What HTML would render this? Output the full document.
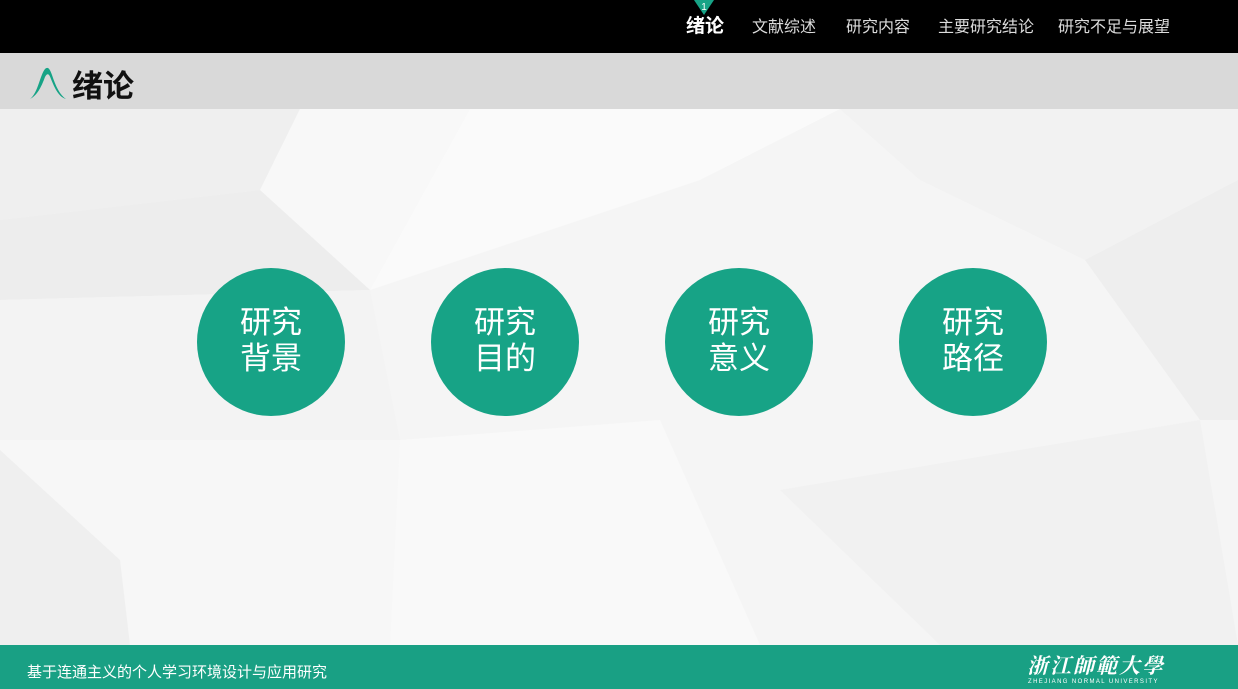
<!DOCTYPE html>
<html><head><meta charset="utf-8"><style>
*{margin:0;padding:0;box-sizing:border-box}
body{width:1238px;height:689px;overflow:hidden;position:relative;background:#f5f5f5;font-family:"Liberation Sans","Noto Sans CJK SC",sans-serif}
.top{position:absolute;left:0;top:0;width:1238px;height:53px;background:#000}
.nav{position:absolute;top:13px;color:#ddd;font-size:16px;white-space:nowrap}
.bar{position:absolute;left:0;top:53px;width:1238px;height:56px;background:#d9d9d9}
.bg{position:absolute;left:0;top:109px;width:1238px;height:536px}
.c{position:absolute;top:268px;width:148px;height:148px;border-radius:50%;background:#17a386;color:#fff;font-size:31px;line-height:36px;text-align:center;padding-top:37px}
.foot{position:absolute;left:0;top:645px;width:1238px;height:44px;background:#19a084;color:#fff}
</style></head><body>
<div class="top">
 <svg style="position:absolute;left:694px;top:0" width="20" height="16"><polygon points="0,0 20,0 10,15" fill="#17a386"/><text x="10" y="10" fill="#fff" font-size="10" text-anchor="middle" font-family="Liberation Sans">1</text></svg>
 <div class="nav" style="left:686px;color:#fff;font-weight:bold;font-size:19px;top:11px">绪论</div>
 <div class="nav" style="left:752px">文献综述</div>
 <div class="nav" style="left:846px">研究内容</div>
 <div class="nav" style="left:938px">主要研究结论</div>
 <div class="nav" style="left:1058px">研究不足与展望</div>
</div>
<div class="bar">
 <svg style="position:absolute;left:28px;top:12px" width="40" height="36"><path d="M2 34 C10 28 12 10 17 4 C20 1 22 4 24 10 C28 22 32 30 38 34 C31 32 27 24 23 14 C21 8 19 8 17 12 C14 20 10 30 2 34Z" fill="#17a386"/></svg>
 <div style="position:absolute;left:72px;top:8px;font-size:31px;font-weight:bold;color:#111">绪论</div>
</div>
<svg class="bg" width="1238" height="536" viewBox="0 109 1238 536">
 <polygon points="0,109 300,109 260,190 0,220" fill="#efefef"/>
 <polygon points="300,109 470,109 370,290 260,190" fill="#f8f8f8"/>
 <polygon points="0,220 260,190 370,290 0,300" fill="#ededed"/>
 <polygon points="470,109 840,109 700,180 370,290" fill="#fafafa"/>
 <polygon points="840,109 1238,109 1238,180 1085,260 920,180" fill="#f2f2f2"/>
 <polygon points="0,300 370,290 400,440 0,440" fill="#f3f3f3"/>
 <polygon points="0,440 400,440 390,645 0,645" fill="#f7f7f7"/>
 <polygon points="0,450 120,560 130,645 0,645" fill="#efefef"/>
 <polygon points="400,440 660,420 760,645 390,645" fill="#f9f9f9"/>
 <polygon points="1085,260 1238,180 1238,420 1200,420" fill="#eeeeee"/>
 <polygon points="780,490 1200,420 1238,645 940,645" fill="#f1f1f1"/>
 <polygon points="700,180 920,180 1085,260 780,490 660,420" fill="#f5f5f5"/>
</svg>
<div class="c" style="left:197px">研究<br>背景</div>
<div class="c" style="left:431px">研究<br>目的</div>
<div class="c" style="left:665px">研究<br>意义</div>
<div class="c" style="left:899px">研究<br>路径</div>
<div class="foot">
 <div style="position:absolute;left:27px;top:16px;font-size:15px">基于连通主义的个人学习环境设计与应用研究</div>
 <div style="position:absolute;left:1027px;top:5px;font-size:21px;letter-spacing:2px;font-family:'Noto Serif CJK SC',serif;font-style:italic;font-weight:bold">浙江師範大學</div>
 <div style="position:absolute;left:1028px;top:34px;font-size:6px;letter-spacing:1.4px">ZHEJIANG NORMAL UNIVERSITY</div>
</div>
</body></html>
